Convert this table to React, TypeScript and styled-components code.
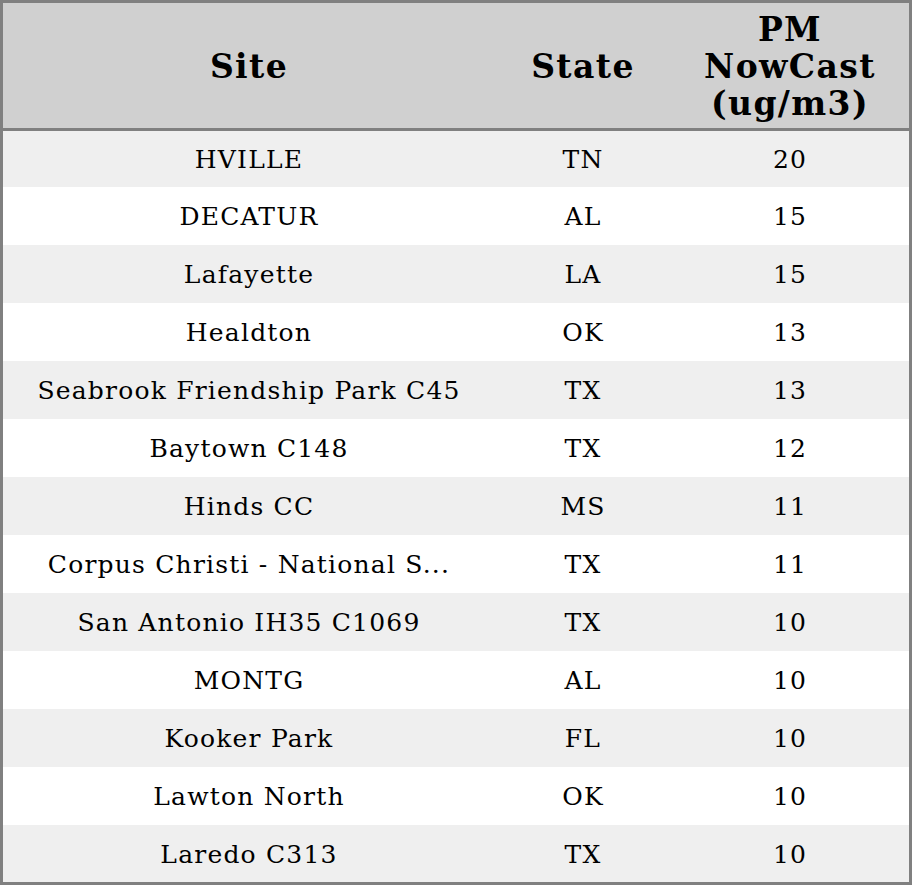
import React from 'react';
import styled, { createGlobalStyle } from 'styled-components';

const GlobalStyle = createGlobalStyle`
  html, body {
    margin: 0;
    padding: 0;
    background: #ffffff;
  }
  body {
    font-family: 'DejaVu Serif', serif;
    color: #000;
  }
`;

interface Reading {
  site: string;
  state: string;
  pm: number;
}

const readings: Reading[] = [
  { site: 'HVILLE', state: 'TN', pm: 20 },
  { site: 'DECATUR', state: 'AL', pm: 15 },
  { site: 'Lafayette', state: 'LA', pm: 15 },
  { site: 'Healdton', state: 'OK', pm: 13 },
  { site: 'Seabrook Friendship Park C45', state: 'TX', pm: 13 },
  { site: 'Baytown C148', state: 'TX', pm: 12 },
  { site: 'Hinds CC', state: 'MS', pm: 11 },
  { site: 'Corpus Christi - National Seashore', state: 'TX', pm: 11 },
  { site: 'San Antonio IH35 C1069', state: 'TX', pm: 10 },
  { site: 'MONTG', state: 'AL', pm: 10 },
  { site: 'Kooker Park', state: 'FL', pm: 10 },
  { site: 'Lawton North', state: 'OK', pm: 10 },
  { site: 'Laredo C313', state: 'TX', pm: 10 },
];

// long site names get cut like the source table does
const shorten = (s: string, max = 28) => (s.length > max ? s.slice(0, max - 1) + '...' : s);

const Frame = styled.div`
  width: 912px;
  height: 885px;
  box-sizing: border-box;
  border: 3px solid #808080;
  display: flex;
  flex-direction: column;
  overflow: hidden;
`;

const HeaderRow = styled.div`
  display: grid;
  grid-template-columns: 492px 176px 1fr;
  height: 125px;
  background: #d0d0d0;
  border-bottom: 3px solid #808080;
`;

const HeaderCell = styled.div`
  display: flex;
  align-items: center;
  justify-content: center;
  text-align: center;
  font-weight: bold;
  font-size: 33px;
  line-height: 37px;
  letter-spacing: 1.4px;
  padding-top: 2px;
`;

const Body = styled.div`
  flex: 1;
  display: grid;
  grid-template-rows: 56px repeat(11, 58px) 1fr;
`;

const Row = styled.div<{ $shaded: boolean }>`
  display: grid;
  grid-template-columns: 492px 176px 1fr;
  align-items: center;
  background: ${(p) => (p.$shaded ? '#efefef' : '#ffffff')};
  font-size: 25px;
  letter-spacing: 1.2px;
`;

const Cell = styled.div`
  text-align: center;
  white-space: nowrap;
  padding-top: 1px;
`;

export default function App() {
  return (
    <>
      <GlobalStyle />
      <Frame>
        <HeaderRow>
          <HeaderCell>Site</HeaderCell>
          <HeaderCell>State</HeaderCell>
          <HeaderCell>
            PM
            <br />
            NowCast
            <br />
            (ug/m3)
          </HeaderCell>
        </HeaderRow>
        <Body>
          {readings.map((r, i) => (
            <Row key={r.site} $shaded={i % 2 === 0}>
              <Cell>{shorten(r.site)}</Cell>
              <Cell>{r.state}</Cell>
              <Cell>{r.pm}</Cell>
            </Row>
          ))}
        </Body>
      </Frame>
    </>
  );
}
